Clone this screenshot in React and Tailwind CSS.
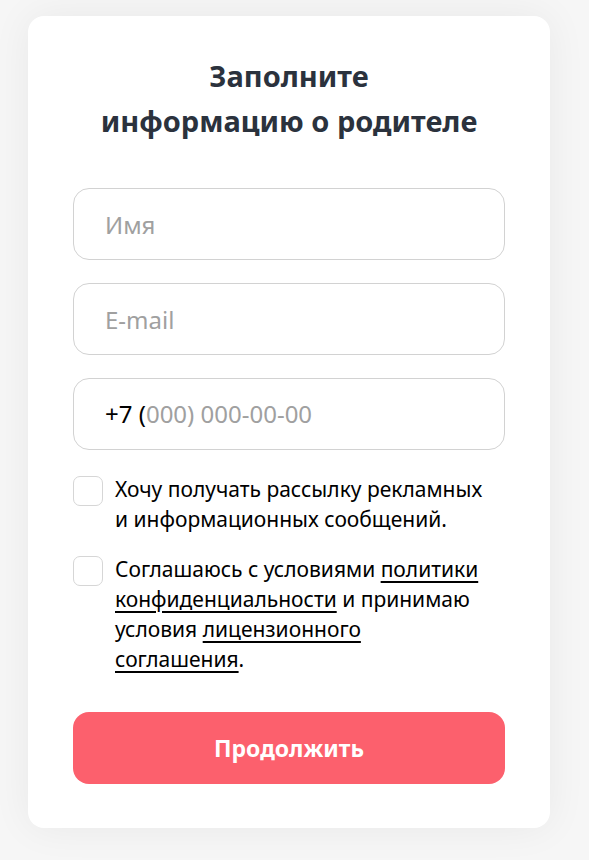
import React from 'react';

const font = { fontFamily: '"Noto Sans", "Open Sans", sans-serif' };

function Field({ placeholder }) {
  return (
    <input
      type="text"
      placeholder={placeholder}
      className="h-[72px] w-full rounded-[16px] border border-[#d2d2d2] bg-white px-[31px] text-[24px] text-black outline-none placeholder:text-[#a0a0a0]"
    />
  );
}

function Check({ children }) {
  return (
    <label className="flex items-start gap-[12px]">
      <span className="mt-[2px] h-[30px] w-[30px] shrink-0 rounded-[7px] border border-[#d6d6d6] bg-white" />
      <span className="w-[378px] text-[21px] leading-[30px] text-black">{children}</span>
    </label>
  );
}

export default function App() {
  return (
    <div className="min-h-[860px] bg-[#f6f6f6] pl-[28px] pt-[16px]" style={font}>
      <div className="w-[522px] rounded-[16px] bg-white px-[45px] pb-[44px] pt-[37px] shadow-[0_0_40px_rgba(0,0,0,0.06)]">
        <h1 className="text-center text-[29px] font-bold leading-[45px] text-[#2b323d]">
          Заполните
          <br />
          информацию о родителе
        </h1>

        <div className="mt-[45px] flex flex-col gap-[23px]">
          <Field placeholder="Имя" />
          <Field placeholder="E-mail" />
          <div className="flex h-[72px] w-full items-center rounded-[16px] border border-[#d2d2d2] bg-white px-[31px] text-[24px]">
            <span className="text-black">+7 (</span>
            <span className="text-[#a0a0a0]">000) 000-00-00</span>
          </div>
        </div>

        <div className="mt-[24px] flex flex-col gap-[20px]">
          <Check>
            Хочу получать рассылку рекламных и информационных сообщений.
          </Check>
          <Check>
            Соглашаюсь с условиями <a className="underline decoration-[1.5px] underline-offset-[4px]">политики конфиденциальности</a> и принимаю условия{' '}
            <a className="underline decoration-[1.5px] underline-offset-[4px]">лицензионного соглашения</a>.
          </Check>
        </div>

        <button className="mt-[38px] flex h-[72px] w-full items-center justify-center rounded-[16px] bg-[#fc606d] text-[23px] font-bold text-white">
          Продолжить
        </button>
      </div>
    </div>
  );
}
